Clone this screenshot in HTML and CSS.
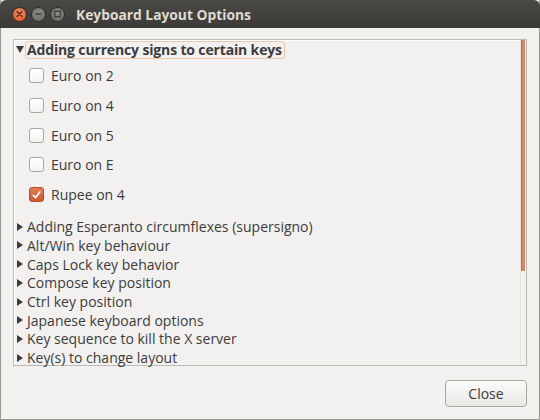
FILE: index.html
```html
<!DOCTYPE html>
<html>
<head>
<meta charset="utf-8">
<link rel="stylesheet" href="styles.css">
</head>
<body>
<div class="window">
  <div class="titlebar">
    <div class="wbtns">
      <span class="wb close"><svg width="14" height="14" viewBox="0 0 14 14"><path d="M4.5 4.5 L9.5 9.5 M9.5 4.5 L4.5 9.5" stroke="#4a2418" stroke-width="1.6" stroke-linecap="round"/></svg></span>
      <span class="wb other"><svg width="14" height="14" viewBox="0 0 14 14"><path d="M4 7 H10" stroke="#3a3935" stroke-width="1.6"/></svg></span>
      <span class="wb other"><svg width="14" height="14" viewBox="0 0 14 14"><rect x="4" y="4" width="6" height="6" fill="none" stroke="#3a3935" stroke-width="1.3"/></svg></span>
    </div>
    <div class="title">Keyboard Layout Options</div>
  </div>
  <div class="content">
    <div class="frame">
      <div class="list">
        <div class="group open">
          <span class="tri down"></span><span class="glabel">Adding currency signs to certain keys</span>
        </div>
        <div class="checks">
          <div class="chk"><span class="box"></span><span>Euro on 2</span></div>
          <div class="chk"><span class="box"></span><span>Euro on 4</span></div>
          <div class="chk"><span class="box"></span><span>Euro on 5</span></div>
          <div class="chk"><span class="box"></span><span>Euro on E</span></div>
          <div class="chk"><span class="box on"><svg width="14" height="14" viewBox="0 0 14 14"><path d="M3.5 7.3 L6 9.8 L10.6 3.8" fill="none" stroke="#fff" stroke-width="1.8" stroke-linecap="round" stroke-linejoin="round"/></svg></span><span>Rupee on 4</span></div>
        </div>
        <div class="rows">
          <div class="row"><span class="tri right"></span>Adding Esperanto circumflexes (supersigno)</div>
          <div class="row"><span class="tri right"></span>Alt/Win key behaviour</div>
          <div class="row"><span class="tri right"></span>Caps Lock key behavior</div>
          <div class="row"><span class="tri right"></span>Compose key position</div>
          <div class="row"><span class="tri right"></span>Ctrl key position</div>
          <div class="row"><span class="tri right"></span>Japanese keyboard options</div>
          <div class="row"><span class="tri right"></span>Key sequence to kill the X server</div>
          <div class="row"><span class="tri right"></span>Key(s) to change layout</div>
        </div>
      </div>
      <div class="scroll"><div class="thumb"></div></div>
    </div>
    <div class="actions">
      <button class="btn">Close</button>
    </div>
  </div>
</div>
</body>
</html>
```

FILE: styles.css
```css
* { box-sizing: border-box; }
html, body { margin: 0; padding: 0; background: #f2f1f0; }
body { width: 540px; height: 420px; overflow: hidden; font-family: "Open Sans", "DejaVu Sans", sans-serif; }
.window {
  width: 540px; height: 420px;
  background: #f2f1f0;
  border: 1px solid #9a9893;
  border-top: none;
  display: flex; flex-direction: column;
}
.titlebar {
  height: 28px;
  margin: 0 -1px;
  background: linear-gradient(#4a4945, #3c3b37);
  border-radius: 6px 6px 0 0;
  display: flex; align-items: center;
  padding-left: 12px;
}
.wbtns { display: flex; gap: 4px; }
.wb {
  width: 15px; height: 15px; border-radius: 50%;
  display: flex; align-items: center; justify-content: center;
}
.wb.close { background: radial-gradient(circle at 50% 35%, #f58b5e, #e0532a); border: 1px solid #2f2e2a; }
.wb.other { background: radial-gradient(circle at 50% 35%, #8a8984, #6a6964); border: 1px solid #2f2e2a; }
.title {
  margin-left: 11px;
  color: #dfdbd2;
  font-weight: bold;
  font-size: 13.8px;
}
.content { flex: 1; display: flex; flex-direction: column; padding: 11px 12px 11px 12px; }
.frame {
  height: 327px;
  border: 1px solid #bdbbb6;
  background: #f2f1f0;
  display: flex;
  box-shadow: inset 1px 1px 0 #fff;
}
.list { flex: 1; color: #3c3c3c; font-size: 14px; padding-top: 0; }
.group { height: 19px; display: flex; align-items: center; padding-left: 2px; margin-top: 0; }
.glabel {
  font-weight: bold;
  border: 1px solid #e9c7a8;
  border-radius: 3px;
  padding: 0 2px 0 1px;
  line-height: 16px;
  letter-spacing: -0.15px;
}
.tri { display: inline-block; width: 0; height: 0; margin-right: 2px; }
.tri.down { border-left: 4px solid transparent; border-right: 4px solid transparent; border-top: 7px solid #3c3c3c; margin-right: 1px; }
.tri.right { border-top: 4px solid transparent; border-bottom: 4px solid transparent; border-left: 6px solid #3c3c3c; margin-left: 3px; margin-right: 4px; }
.checks { padding-left: 15px; padding-top: 2px; }
.chk { height: 29.7px; display: flex; align-items: center; }
.box {
  width: 15px; height: 15px;
  border: 1px solid #a9a7a2;
  border-radius: 3px;
  background: linear-gradient(#ffffff, #f4f3f1);
  margin-right: 7px;
  display: flex; align-items: center; justify-content: center;
}
.box.on { background: linear-gradient(#e47a52, #c95a35); border-color: #b24e2c; }
.rows { padding-top: 8px; }
.row { height: 18.7px; display: flex; align-items: center; letter-spacing: 0; }
.scroll { width: 6px; margin-right: 0; display: flex; flex-direction: column; border-left: 1px solid #e6e4e0; }
.thumb { height: 231px; width: 4px; background: #d9866a; border-left: 1px solid #c46b4c; }
.actions { display: flex; justify-content: flex-end; margin-top: 14px; }
.btn {
  width: 82px; height: 27px;
  border: 1px solid #a9a7a2;
  border-radius: 4px;
  background: linear-gradient(#fbfbfa, #e9e8e5);
  font-family: "Open Sans", "DejaVu Sans", sans-serif;
  font-size: 14px;
  color: #3c3c3c;
  margin-right: 0;
}
```
